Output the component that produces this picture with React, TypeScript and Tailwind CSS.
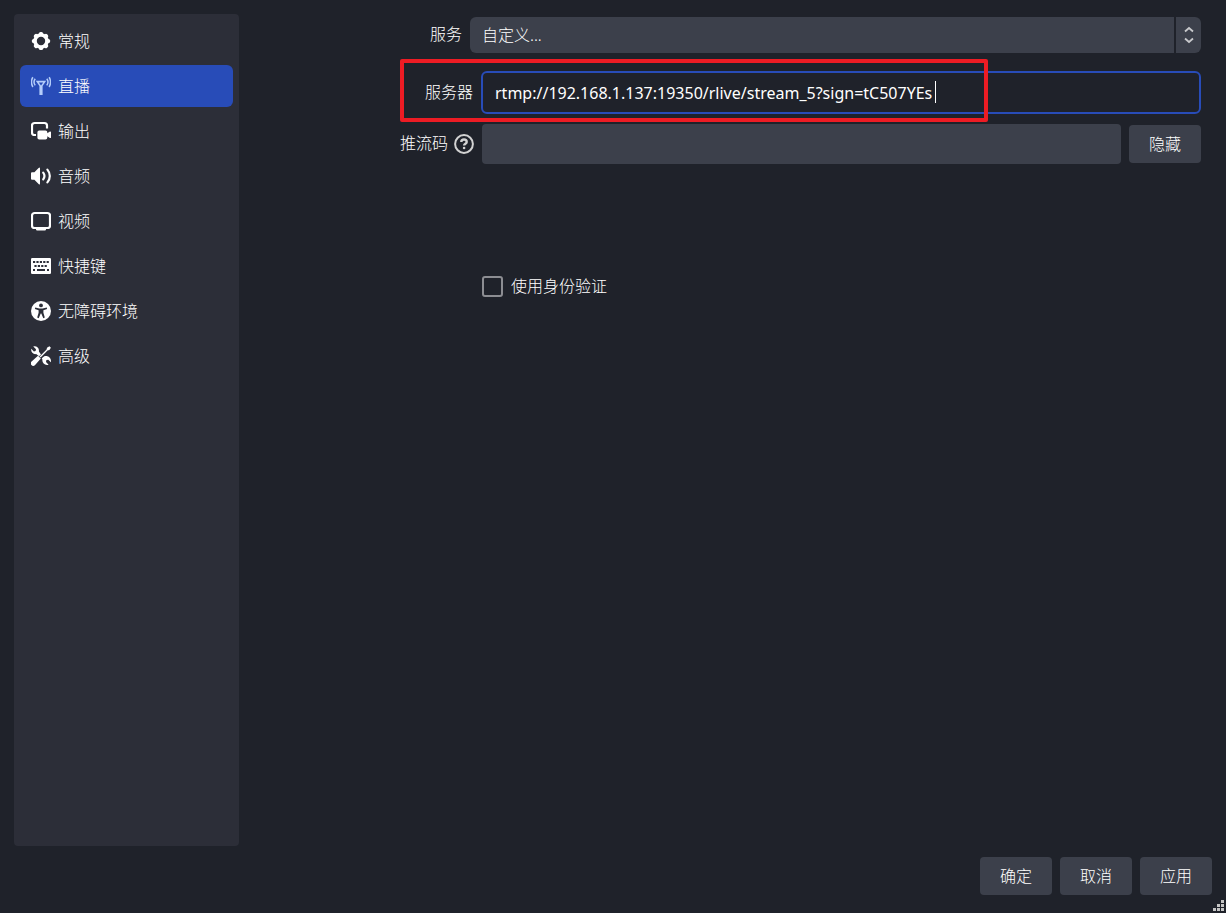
import { useState } from "react";

type IconProps = { className?: string };

function GearIcon({ className }: IconProps) {
  return (
    <svg viewBox="0 0 20 20" className={className} aria-hidden="true">
      <circle cx="10" cy="10" r="6" fill="none" stroke="currentColor" strokeWidth="3.6" />
      {[0, 45, 90, 135, 180, 225, 270, 315].map((angle) => (
        <rect
          key={angle}
          x="7.9"
          y="0.9"
          width="4.2"
          height="4"
          rx="1.6"
          fill="currentColor"
          transform={`rotate(${angle} 10 10)`}
        />
      ))}
    </svg>
  );
}

function StreamIcon({ className }: IconProps) {
  return (
    <svg viewBox="0 0 20 20" className={className} aria-hidden="true" fill="none" stroke="currentColor">
      <path d="M4.8 4.8h10.4L11.6 10v9H8.400v-9z" fill="currentColor" stroke="none" />
      <path d="M7.8 6.600h4.400L10 9.400z" fill="#284cb8" stroke="none" />
      <path d="M4.200 2.800c-1.300 1.800-1.300 4.800 0 6.600M15.800 2.800c1.300 1.800 1.300 4.800 0 6.600" strokeWidth="1.5" />
      <path d="M1.900 1.200c-1.900 2.700-1.900 7.100 0 9.800M18.100 1.200c1.900 2.700 1.900 7.100 0 9.800" strokeWidth="1.5" />
    </svg>
  );
}

function OutputIcon({ className }: IconProps) {
  return (
    <svg viewBox="0 0 20 20" className={className} aria-hidden="true" fill="currentColor">
      <path
        d="M5 14H3.6A2.6 2.6 0 0 1 1 11.400V4.600A2.600 2.600 0 0 1 3.600 2H13.400A2.600 2.600 0 0 1 16 4.600V7.500"
        fill="none"
        stroke="currentColor"
        strokeWidth="2.2"
      />
      <path d="M8.200 9.500h6.300a1.800 1.800 0 0 1 1.800 1.800v.9l2.600-1.700c.5-.3 1.100 0 1.100.5v5.500c0 .5-.6.8-1.100.5l-2.600-1.700v1.400a1.800 1.800 0 0 1-1.800 1.800H8.200a1.800 1.800 0 0 1-1.800-1.800v-5.400a1.800 1.800 0 0 1 1.800-1.800z" />
    </svg>
  );
}

function AudioIcon({ className }: IconProps) {
  return (
    <svg viewBox="0 0 20 20" className={className} aria-hidden="true" fill="currentColor">
      <path d="M0 7.200Q0 6.200 1 6.200H3.400L7.600 2Q9 .8 9 2.400V17.600Q9 19.200 7.600 18L3.400 13.800H1Q0 13.800 0 12.800z" />
      <path
        d="M12.200 6.600c1.500 2 1.500 4.800 0 6.800M16.400 3.600c3.200 3.700 3.200 9.100 0 12.800"
        fill="none"
        stroke="currentColor"
        strokeWidth="2.2"
        strokeLinecap="round"
      />
    </svg>
  );
}

function VideoIcon({ className }: IconProps) {
  return (
    <svg viewBox="0 0 20 20" className={className} aria-hidden="true">
      <rect x="1" y="2" width="18" height="15" rx="2.600" fill="none" stroke="currentColor" strokeWidth="2.2" />
      <path d="M5 18h10v.6q0 .8-.8.8H5.800q-.8 0-.8-.8z" fill="currentColor" />
    </svg>
  );
}

function KeyboardIcon({ className }: IconProps) {
  return (
    <svg viewBox="0 0 20 20" className={className} aria-hidden="true">
      <rect x="0" y="2" width="20" height="16" rx="1.200" fill="currentColor" />
      <g fill="#2c2e38">
        {[2, 5.400, 8.800, 12.200, 15.600].map((x) => (
          <rect key={x} x={x} y="5" width="2.200" height="2" />
        ))}
        {[3.400, 6.800, 10.200, 13.600].map((x) => (
          <rect key={x} x={x} y="9" width="2.200" height="2" />
        ))}
        <rect x="2" y="13" width="2" height="2" />
        <rect x="6" y="13" width="8" height="2" />
        <rect x="16" y="13" width="2" height="2" />
      </g>
    </svg>
  );
}

function AccessibilityIcon({ className }: IconProps) {
  return (
    <svg viewBox="0 0 20 20" className={className} aria-hidden="true">
      <circle cx="10" cy="10" r="10" fill="currentColor" />
      <circle cx="10" cy="4.400" r="1.900" fill="#2c2e38" />
      <path
        d="M4.200 6.600L8.400 7.600h3.200l4.200-1 .3 1.300-3.700 1.300v2.600l1.400 4.800-1.500.6-2-4.600h-.6l-2 4.600-1.500-.6 1.400-4.800V9.200L3.900 7.900z"
        fill="#2c2e38"
      />
    </svg>
  );
}

function ToolsIcon({ className }: IconProps) {
  return (
    <svg viewBox="0 0 20 20" className={className} aria-hidden="true" fill="currentColor">
      <path d="M.6 15.600L7 9.800l2.800 2.800-5.900 6.600a2.300 2.300 0 0 1-3.300-3.600z" />
      <path d="M8.600 10.400L15.600 3.600l.4-1.900L18.400.2l1.500 1.500-1.500 2.400-1.900.4-6.900 7z" />
      <path d="M2.300.5L5 3.200 4.600 5 2.900 5.400.3 2.700C-.4 5.600 1.900 8.600 5.100 8.100l3 2.200L10 8.600 7.900 5.600C8.600 2.200 5.500-.4 2.300.5z" />
      <path d="M10.800 12.200l2.500-1.900c4.100-1 7.300 2 6.600 6l-2.600-2.500-1.900.3-.4 1.900 2.600 2.700c-3.700 1.100-6.800-1.700-6.200-5.200z" />
    </svg>
  );
}

const menu = [
  { id: "general", label: "常规", Icon: GearIcon },
  { id: "stream", label: "直播", Icon: StreamIcon },
  { id: "output", label: "输出", Icon: OutputIcon },
  { id: "audio", label: "音频", Icon: AudioIcon },
  { id: "video", label: "视频", Icon: VideoIcon },
  { id: "hotkeys", label: "快捷键", Icon: KeyboardIcon },
  { id: "accessibility", label: "无障碍环境", Icon: AccessibilityIcon },
  { id: "advanced", label: "高级", Icon: ToolsIcon },
];

const buttonClass =
  "h-[38px] w-[72px] shrink-0 rounded bg-[#3c404b] text-center hover:bg-[#4a4f5c]";

export default function App() {
  const [active, setActive] = useState("stream");
  const [server, setServer] = useState("rtmp://192.168.1.137:19350/rlive/stream_5?sign=tC507YEs");
  const [streamKey, setStreamKey] = useState("");
  const [showKey, setShowKey] = useState(true);
  const [useAuth, setUseAuth] = useState(false);

  return (
    <div className="relative flex min-h-screen flex-col bg-[#1f222a] font-['Noto_Sans','Noto_Sans_CJK_SC',sans-serif] text-base font-light text-white">
      <div className="flex flex-1 pt-3.5 pl-3.5">
        {/* Sidebar */}
        <nav className="flex w-[225px] shrink-0 flex-col gap-[3px] rounded bg-[#2c2e38] p-1.5">
          {menu.map(({ id, label, Icon }) => (
            <button
              key={id}
              type="button"
              onClick={() => setActive(id)}
              className={`flex h-[42px] items-center gap-[7px] rounded-md px-[11px] ${
                active === id ? "bg-[#284cb8]" : "hover:bg-[#3c404b]"
              }`}
            >
              <Icon className={`size-5 shrink-0 ${id === "stream" ? "text-[#b4cdfa]" : "text-white"}`} />
              <span>{label}</span>
            </button>
          ))}
        </nav>

        {/* Stream settings */}
        <form className="mr-[25px] ml-[161px] flex min-w-0 flex-1 flex-col pt-[3px]">
          <div className="flex items-center gap-2">
            <label htmlFor="service" className="w-[62px] shrink-0 pb-0.5 text-right">
              服务
            </label>
            <div className="relative min-w-0 flex-1">
              <select
                id="service"
                className="h-9 w-full appearance-none rounded-md bg-[#3c404b] px-3 outline-none"
              >
                <option>自定义...</option>
              </select>
              <span className="pointer-events-none absolute inset-y-0 right-0 flex w-[27px] items-center justify-center border-l-2 border-[#1f222a]">
                <svg viewBox="0 0 10 18" className="h-[18px] w-2.5" fill="none" stroke="#c8c9cc" strokeWidth="1.8">
                  <path d="M1 5.500L5 2l4 3.500M1 12.500L5 16l4-3.500" />
                </svg>
              </span>
            </div>
          </div>

          <div className="relative mt-[18px] flex items-center gap-2">
            <label htmlFor="server" className="w-[73px] shrink-0 pb-0.5 text-right">
              服务器
            </label>
            <div className="relative min-w-0 flex-1">
              <input
                id="server"
                type="text"
                value={server}
                onChange={(e) => setServer(e.target.value)}
                className="h-[43px] w-full rounded-md border-2 border-[#284cb8] bg-[#1f222a] px-3 font-normal caret-transparent outline-none"
              />
              <span className="pointer-events-none absolute top-2.5 left-[454px] h-[22px] w-px bg-white" />
            </div>
            {/* red marker round the server address */}
            <div className="pointer-events-none absolute -top-3 -bottom-2 left-0 w-[588px] rounded-xs border-4 border-[#ed1c24]" />
          </div>

          <div className="mt-2.5 flex items-center gap-2">
            <div className="flex w-[74px] shrink-0 items-center justify-between">
              <label htmlFor="key" className="pb-0.5">
                推流码
              </label>
              <svg viewBox="0 0 20 20" className="size-5" fill="none" stroke="#d2d2d2" aria-hidden="true">
                <circle cx="10" cy="10" r="8.900" strokeWidth="2" />
                <path d="M7.300 8c0-3.400 5.400-3.400 5.400 0 0 1.800-2.600 1.700-2.600 3.600" strokeWidth="2.4" />
                <circle cx="10.100" cy="14" r="1.300" fill="#d2d2d2" stroke="none" />
              </svg>
            </div>
            <input
              id="key"
              type={showKey ? "text" : "password"}
              value={streamKey}
              onChange={(e) => setStreamKey(e.target.value)}
              className="h-10 min-w-0 flex-1 rounded bg-[#3c404b] px-3 outline-none"
            />
            <button type="button" onClick={() => setShowKey(!showKey)} className={buttonClass}>
              隐藏
            </button>
          </div>

          <label className="mt-[110px] ml-[82px] flex items-center gap-2 self-start">
            <input
              type="checkbox"
              checked={useAuth}
              onChange={(e) => setUseAuth(e.target.checked)}
              className="size-[21px] appearance-none rounded-[3px] border-2 border-[#8c8d92] checked:bg-[#284cb8]"
            />
            使用身份验证
          </label>
        </form>
      </div>

      <footer className="flex justify-end gap-2 px-3.5 pt-[11px] pb-[18px]">
        <button type="button" className={buttonClass}>确定</button>
        <button type="button" className={buttonClass}>取消</button>
        <button type="button" className={buttonClass}>应用</button>
      </footer>

      {/* Resize grip */}
      <svg viewBox="0 0 11 11" className="absolute right-0.5 bottom-0.5 size-[11px]" fill="#c4c4c4" aria-hidden="true">
        <path d="M8 0h3v3H8zM4 4h3v3H4zM8 4h3v3H8zM0 8h3v3H0zM4 8h3v3H4zM8 8h3v3H8z" />
      </svg>
    </div>
  );
}
